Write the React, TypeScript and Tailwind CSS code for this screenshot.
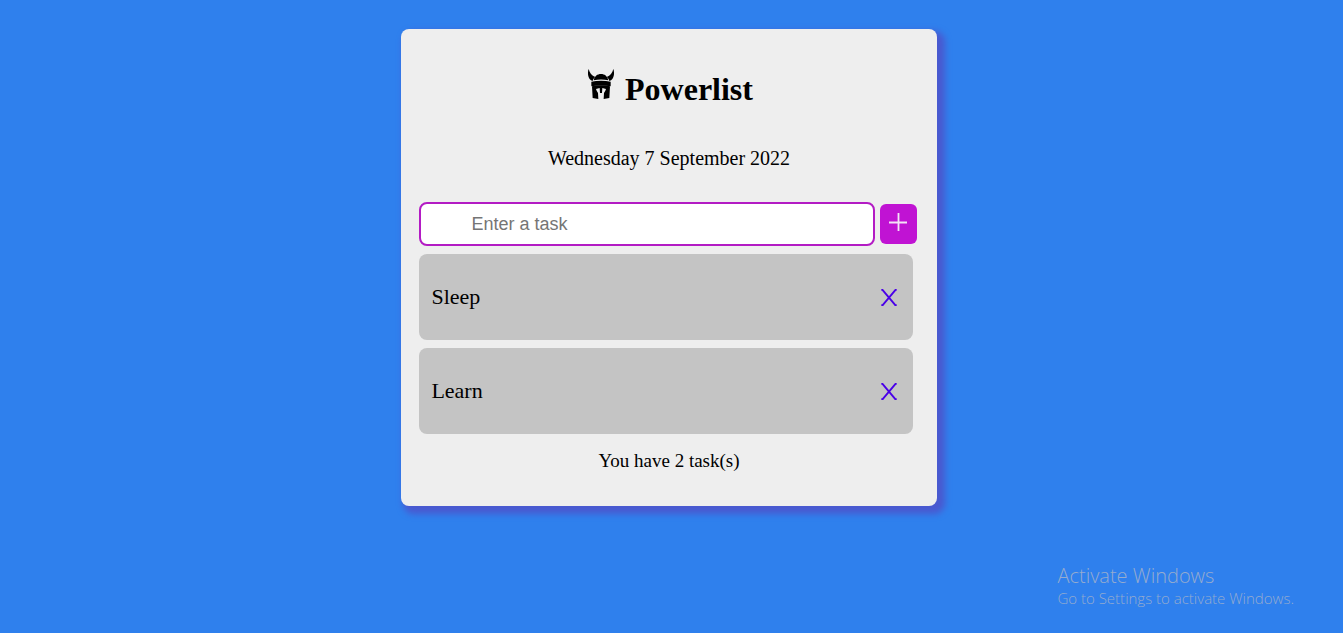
import { useState, type FormEvent } from "react";

function VikingHelmet() {
  return (
    <svg viewBox="0 0 78 90" className="h-[30px] w-[26px]" fill="#000" aria-hidden="true">
      <path d="M2 0C-2 12 0 23 5 30c2 3 5 5 9 6 1-5 4-9 8-12C11 20 5 12 2 0Z" />
      <path d="M76 0c4 12 2 23-3 30-2 3-5 5-9 6-1-5-4-9-8-12C67 20 73 12 76 0Z" />
      <path d="M17 34C20 21 28 15 39 15s19 6 22 19c-14-3-30-3-44 0Z" />
      <path d="M10 38c18-4 40-4 58 0v14c-18-3-40-3-58 0Z" />
      <path d="M12 52c8-2 17-3 27-3s19 1 27 3l-2 35-17 3 1-18 4-7 2-5-11-3-1 15h-6l-1-15-11 3 2 5 4 7 1 18-17-3Z" />
    </svg>
  );
}

function Plus() {
  return (
    <svg viewBox="0 0 18 18" className="size-[18px]" stroke="#f3e3f5" strokeWidth="1.8" aria-hidden="true">
      <path d="M9.5 0v18M0 9.5h18" />
    </svg>
  );
}

function Cross() {
  return (
    <svg viewBox="0 0 16 17" className="h-[17px] w-4" fill="none" stroke="#4a00e8" strokeWidth="1.9" aria-hidden="true">
      <path d="M.3.9h1.2L14.3 16.1h1.4M15.7.9h-1.2L1.7 16.1H.3" />
    </svg>
  );
}

export default function App() {
  const [tasks, setTasks] = useState(["Sleep", "Learn"]);
  const [draft, setDraft] = useState("");

  const addTask = (event: FormEvent) => {
    event.preventDefault();
    if (draft.trim()) {
      setTasks([...tasks, draft.trim()]);
      setDraft("");
    }
  };

  return (
    <div className="flex min-h-screen flex-col bg-[#2f80ed] pr-[5px] font-['Liberation_Serif',serif] text-black">
      <main className="mx-auto mt-[29px] w-2/5 rounded-lg bg-[#eeeeee] px-[18px] pt-10 pb-8 shadow-[5px_5px_6px_3px_#4959d0]">
        <h1 className="flex items-start justify-center gap-[11px] pl-[3px] text-[32px] leading-10 font-bold">
          <VikingHelmet />
          Powerlist
        </h1>
        <p className="mt-[35px] text-center text-xl leading-7">Wednesday 7 September 2022</p>
        <form onSubmit={addTask} className="mt-[30px] flex items-center gap-[5px] pr-0.5">
          <input
            type="text"
            aria-label="Enter a task"
            placeholder="Enter a task"
            value={draft}
            onChange={(event) => setDraft(event.target.value)}
            className="h-11 min-w-0 flex-1 rounded-lg border-2 border-[#b31bc4] bg-white pr-3 pl-[50px] font-['Liberation_Sans',sans-serif] text-lg outline-none placeholder:text-[#757575]"
          />
          <button
            type="submit"
            aria-label="Add task"
            className="flex h-10 w-[37px] items-center justify-center rounded-md bg-[#c013d3] pb-1"
          >
            <Plus />
          </button>
        </form>
        <ul className="mt-2 flex flex-col gap-2 pr-1.5">
          {tasks.map((task, index) => (
            <li key={index} className="flex h-[86px] items-center justify-between rounded-lg bg-[#c4c4c4] pr-4 pl-3">
              <span className="text-[22px] leading-7">{task}</span>
              <button
                type="button"
                aria-label={`Delete ${task}`}
                onClick={() => setTasks(tasks.filter((_, other) => other !== index))}
              >
                <Cross />
              </button>
            </li>
          ))}
        </ul>
        <p className="mt-3.5 text-center text-[19px] leading-[26px]">You have {tasks.length} task(s)</p>
      </main>
      <aside className="mt-auto mr-11 mb-[25px] self-end font-['Open_Sans',sans-serif] font-light text-[#95abcf]">
        <p className="text-[20px] leading-6">Activate Windows</p>
        <p className="text-[15px] leading-5">Go to Settings to activate Windows.</p>
      </aside>
    </div>
  );
}
